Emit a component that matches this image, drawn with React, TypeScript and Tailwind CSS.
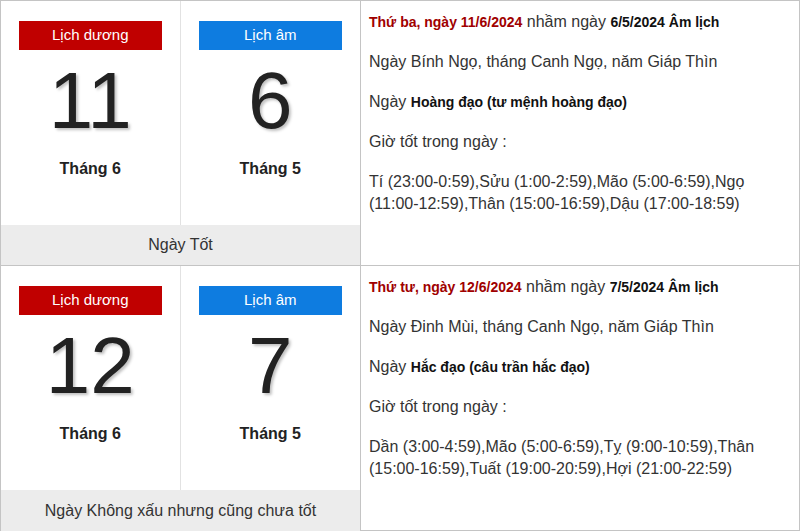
import React from 'react'

interface DayInfo {
  solarDay: string
  solarMonth: string
  lunarDay: string
  lunarMonth: string
  rating: string
  weekday: string
  lunarDate: string
  canChi: string
  kind: string
  hours: string[]
}

const days: DayInfo[] = [
  {
    solarDay: '11',
    solarMonth: 'Tháng 6',
    lunarDay: '6',
    lunarMonth: 'Tháng 5',
    rating: 'Ngày Tốt',
    weekday: 'Thứ ba, ngày 11/6/2024',
    lunarDate: '6/5/2024 Âm lịch',
    canChi: 'Ngày Bính Ngọ, tháng Canh Ngọ, năm Giáp Thìn',
    kind: 'Hoàng đạo (tư mệnh hoàng đạo)',
    hours: [
      'Tí (23:00-0:59),Sửu (1:00-2:59),Mão (5:00-6:59),Ngọ',
      '(11:00-12:59),Thân (15:00-16:59),Dậu (17:00-18:59)',
    ],
  },
  {
    solarDay: '12',
    solarMonth: 'Tháng 6',
    lunarDay: '7',
    lunarMonth: 'Tháng 5',
    rating: 'Ngày Không xấu nhưng cũng chưa tốt',
    weekday: 'Thứ tư, ngày 12/6/2024',
    lunarDate: '7/5/2024 Âm lịch',
    canChi: 'Ngày Đinh Mùi, tháng Canh Ngọ, năm Giáp Thìn',
    kind: 'Hắc đạo (câu trần hắc đạo)',
    hours: [
      'Dần (3:00-4:59),Mão (5:00-6:59),Tỵ (9:00-10:59),Thân',
      '(15:00-16:59),Tuất (19:00-20:59),Hợi (21:00-22:59)',
    ],
  },
]

function DateCell({ label, badge, day, month, divider }: { label: string; badge: string; day: string; month: string; divider?: boolean }) {
  return (
    <div className={`flex w-[180px] flex-col items-center pt-[20px] ${divider ? 'border-r border-[#e2e2e2]' : ''}`}>
      <div className={`flex h-[29px] w-[143px] items-center justify-center text-[15px] text-white ${badge}`}>
        {label}
      </div>
      <div className="mt-[12px] text-[80px] leading-[78px] text-[#222] [text-shadow:2px_2px_3px_rgba(0,0,0,0.25)]">
        {day}
      </div>
      <div className="mt-[19px] text-[16px] font-bold leading-[20px] text-[#222]">{month}</div>
    </div>
  )
}

function DayRow({ d, last }: { d: DayInfo; last?: boolean }) {
  return (
    <div className={`flex h-[265px] ${last ? '' : 'border-b border-[#c4c4c4]'}`}>
      <div className="flex w-[360px] flex-col border-r border-[#c4c4c4]">
        <div className="flex h-[224px]">
          <DateCell label="Lịch dương" badge="bg-[#c00000]" day={d.solarDay} month={d.solarMonth} divider />
          <DateCell label="Lịch âm" badge="bg-[#0e7ce0]" day={d.lunarDay} month={d.lunarMonth} />
        </div>
        <div className="flex flex-1 items-center justify-center bg-[#ececec] text-[16px] text-[#333]">{d.rating}</div>
      </div>
      <div className="flex flex-1 flex-col gap-[18px] pl-[8px] pt-[10px] text-[16px] leading-[22px] text-[#333]">
        <p>
          <b className="text-[14px] text-[#a00000]">{d.weekday}</b> nhầm ngày{' '}
          <b className="text-[14px] text-[#111]">{d.lunarDate}</b>
        </p>
        <p>{d.canChi}</p>
        <p>
          Ngày <b className="text-[14px] text-[#111]">{d.kind}</b>
        </p>
        <p>Giờ tốt trong ngày :</p>
        <p>
          {d.hours[0]}
          <br />
          {d.hours[1]}
        </p>
      </div>
    </div>
  )
}

export default function App() {
  return (
    <div className="h-[531px] w-[800px] overflow-hidden bg-white font-['Liberation_Sans',Arial,sans-serif]">
      <div className="h-[531px] border border-[#c4c4c4]">
        {days.map((d, i) => (
          <DayRow key={d.solarDay} d={d} last={i === days.length - 1} />
        ))}
      </div>
    </div>
  )
}
